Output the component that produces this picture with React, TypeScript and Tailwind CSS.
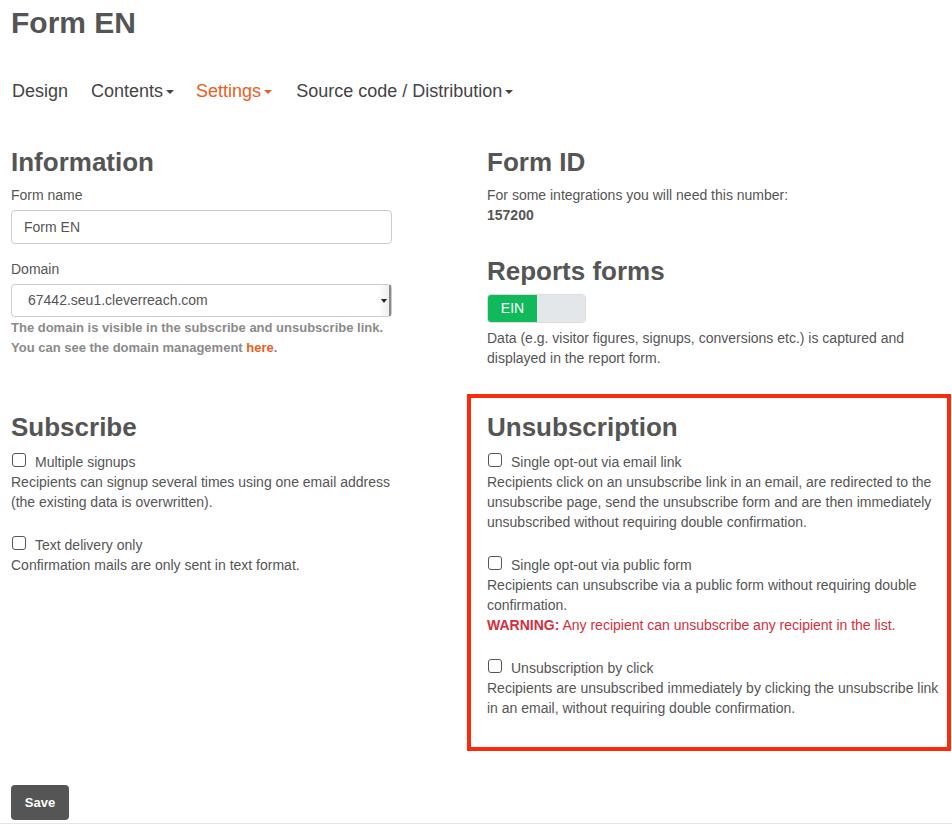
import React from "react";

const font = "font-['Liberation_Sans',Arial,Helvetica,sans-serif]";

function Caret({ orange }: { orange?: boolean }) {
    return (
        <span
            className={`inline-block ml-[3px] align-middle w-0 h-0 border-x-[4px] border-x-transparent border-t-[4px] ${orange ? "border-t-[#e8601c]" : "border-t-[#444]"}`}
        />
    );
}

function CheckOption({ label, children, first }: { label: string; children: React.ReactNode; first?: boolean }) {
    return (
        <div className={first ? "mt-[10px]" : "mt-[23px]"}>
            <label className="flex items-start gap-[9px] leading-[20px]">
                <span className="mt-[1px] ml-[1px] w-[14px] h-[14px] rounded-[3px] border-[1.5px] border-[#555] bg-white shrink-0" />
                <span>{label}</span>
            </label>
            <div className="leading-[20px]">{children}</div>
        </div>
    );
}

export default function App() {
    return (
        <div className={`${font} bg-white text-[#555] text-[14px] min-h-[827px]`}>
            <div className="pl-[11px] pt-[5px]">
                <h1 className="text-[30px] leading-[36px] font-bold">Form EN</h1>

                {/* tabs */}
                <nav className="mt-[38px] flex items-center text-[18px] leading-[24px] text-[#444]">
                    <span className="ml-[1px]">Design</span>
                    <span className="ml-[23px]">Contents<Caret /></span>
                    <span className="ml-[22px] text-[#e8601c]">Settings<Caret orange /></span>
                    <span className="ml-[24px]">Source code / Distribution<Caret /></span>
                </nav>

                {/* row 1 */}
                <div className="mt-[44px] flex">
                    <div className="w-[456px]">
                        <div className="w-[381px]">
                            <h2 className="text-[26px] leading-[30px] font-bold">Information</h2>
                            <div className="mt-[8px] leading-[20px]">Form name</div>
                            <div className="mt-[5px] h-[34px] rounded-[4px] border border-[#ccc] pl-[12px] flex items-center">
                                Form EN
                            </div>
                            <div className="mt-[15px] leading-[20px]">Domain</div>
                            <div className="mt-[5px] h-[33px] rounded-[4px] border border-[#ccc] flex items-center">
                                <span className="pl-[16px] flex-1">67442.seu1.cleverreach.com</span>
                                <span className="h-full w-[12px] flex items-center justify-center border-r-[2px] border-r-[#8a8a8a] bg-gradient-to-r from-white to-[#eee]">
                                    <span className="w-0 h-0 border-x-[3px] border-x-transparent border-t-[4px] border-t-[#222]" />
                                </span>
                            </div>
                            <p className="mt-[1px] text-[13px] leading-[20px] font-bold text-[#8a8a8a]">
                                The domain is visible in the subscribe and unsubscribe link.
                                <br />
                                You can see the domain management <span className="text-[#e8601c]">here</span>.
                            </p>
                        </div>
                    </div>

                    <div className="w-[484px] pl-[20px]">
                        <h2 className="text-[26px] leading-[30px] font-bold">Form ID</h2>
                        <p className="mt-[8px] leading-[20px]">
                            For some integrations you will need this number:
                            <br />
                            <b>157200</b>
                        </p>
                        <h2 className="mt-[31px] text-[26px] leading-[30px] font-bold">Reports forms</h2>
                        <div className="mt-[8px] flex w-[99px] h-[29px] rounded-[4px] overflow-hidden border border-[#ddd]">
                            <div className="w-[49px] bg-[#10b95a] text-white flex items-center justify-center">EIN</div>
                            <div className="flex-1 bg-[#e4e7ea]" />
                        </div>
                        <p className="mt-[5px] leading-[20px] w-[440px]">
                            Data (e.g. visitor figures, signups, conversions etc.) is captured and displayed in the report form.
                        </p>
                    </div>
                </div>

                {/* row 2 */}
                <div className="mt-[26px] flex">
                    <div className="w-[456px] pt-[18px]">
                        <div className="w-[381px]">
                            <h2 className="text-[26px] leading-[30px] font-bold">Subscribe</h2>
                            <CheckOption label="Multiple signups" first>
                                Recipients can signup several times using one email address (the existing data is overwritten).
                            </CheckOption>
                            <CheckOption label="Text delivery only">
                                Confirmation mails are only sent in text format.
                            </CheckOption>
                        </div>
                    </div>

                    <div className="w-[484px] border-[4px] border-[#fa2a0a] pt-[14px] pl-[16px] pr-0 pb-[29px]">
                        <h2 className="text-[26px] leading-[30px] font-bold">Unsubscription</h2>
                        <CheckOption label="Single opt-out via email link" first>
                            Recipients click on an unsubscribe link in an email, are redirected to the unsubscribe page, send the unsubscribe form and are then immediately unsubscribed without requiring double confirmation.
                        </CheckOption>
                        <CheckOption label="Single opt-out via public form">
                            Recipients can unsubscribe via a public form without requiring double confirmation.
                            <div className="text-[#d12f3c]">
                                <b>WARNING:</b> Any recipient can unsubscribe any recipient in the list.
                            </div>
                        </CheckOption>
                        <CheckOption label="Unsubscription by click">
                            Recipients are unsubscribed immediately by clicking the unsubscribe link in an email, without requiring double confirmation.
                        </CheckOption>
                    </div>
                </div>

                <button className="mt-[34px] w-[58px] h-[35px] rounded-[4px] bg-[#555] text-white text-[13px] font-bold">
                    Save
                </button>
            </div>
            <div className="mt-[3px] border-t border-[#e6e6e6]" />
        </div>
    );
}
